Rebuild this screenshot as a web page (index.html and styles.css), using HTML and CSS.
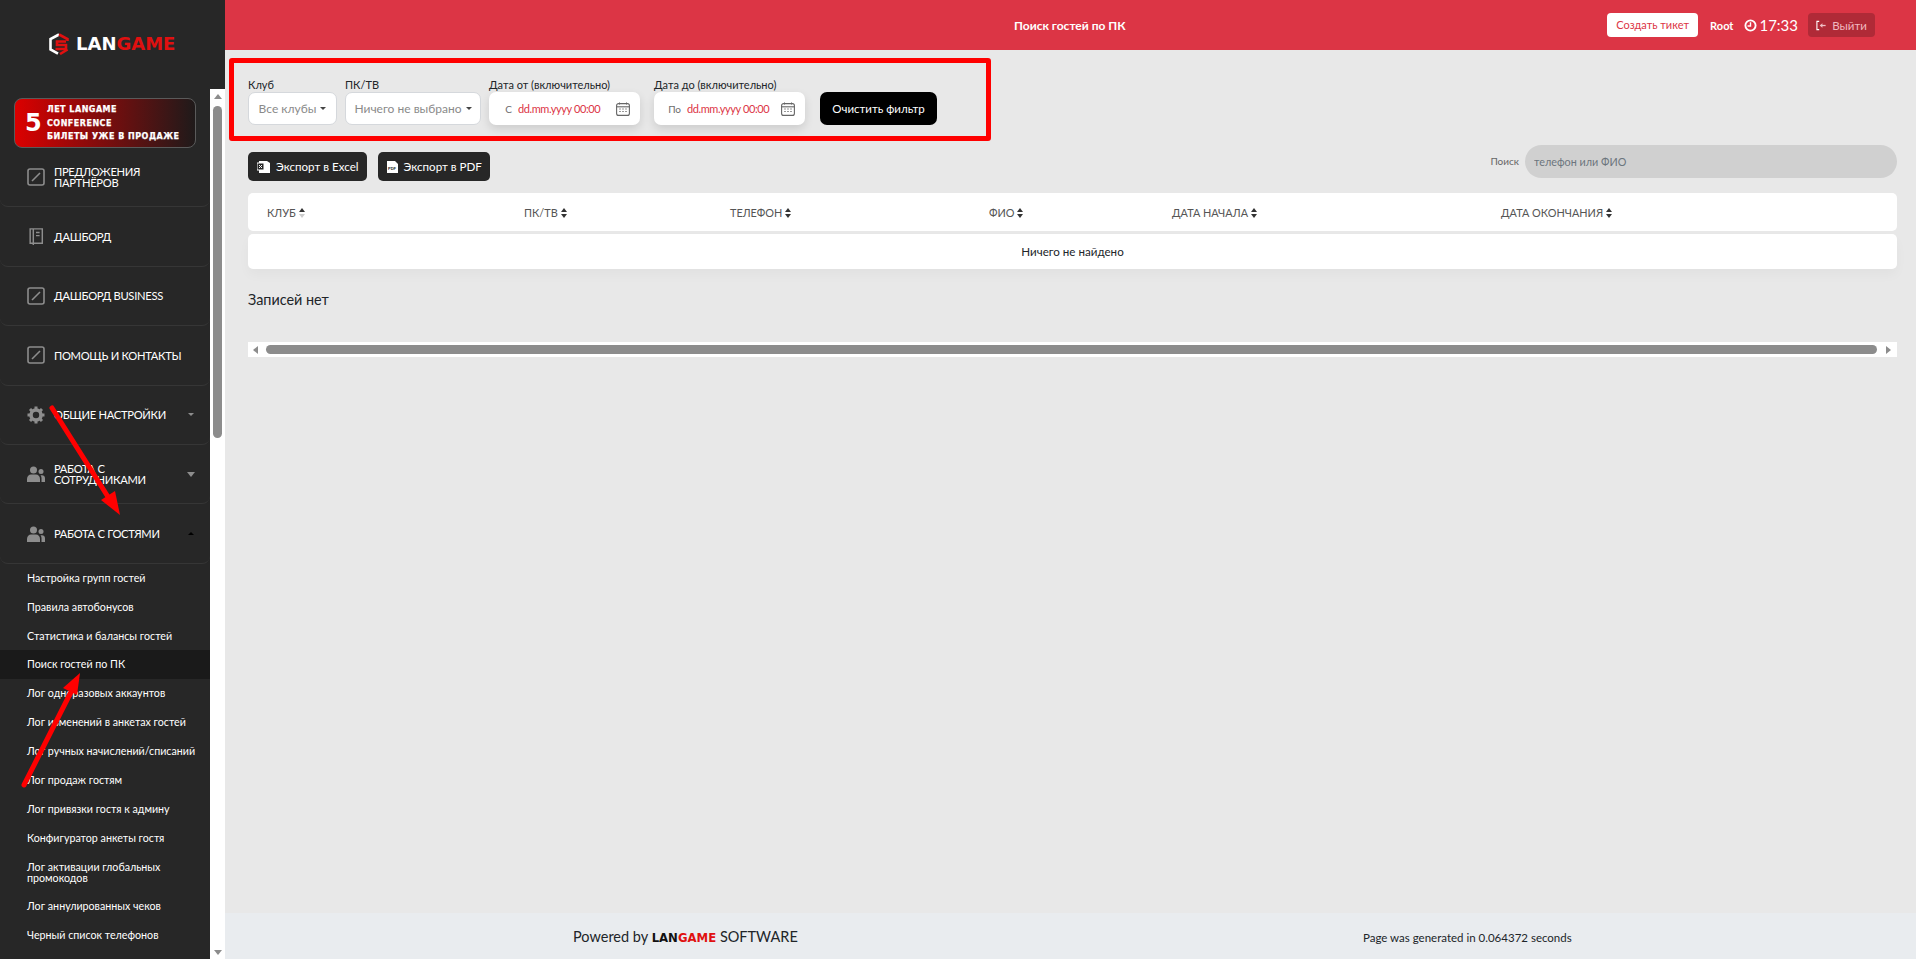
FILE: index.html
```html
<!DOCTYPE html>
<html lang="ru">
<head>
    <meta charset="UTF-8">
    <title>Поиск гостей по ПК</title>
    <link rel="stylesheet" href="styles.css">
</head>
<body>
    <div class="app">
        <!-- Боковое меню -->
        <aside class="sidebar">
            <div class="sidebar-top">
                <svg class="logo-icon" viewBox="0 0 22 22" width="22" height="22" fill="none" stroke-width="2.6">
                    <path d="M11 1.5 2.500 6v10.500l7.500 4.200" stroke="#fff"/>
                    <path d="M11 1.500 19.500 6v2M19.500 16.500 12 21" stroke="#e01010"/>
                    <path d="M18 8.500H9V12H18V16H7.500" stroke="#e01010"/>
                </svg>
                <span class="logo-text">LAN<b>GAME</b></span>
            </div>
            <div class="sidebar-body">
                <div class="sidebar-scroll">
                    <div class="banner">
                        <span class="banner-num">5</span>
                        <div class="banner-text">
                            <span>ЛЕТ LANGAME</span>
                            <span>CONFERENCE</span>
                            <span>БИЛЕТЫ УЖЕ В ПРОДАЖЕ</span>
                        </div>
                    </div>
                    <nav>
                        <a class="nav-item">
                            <svg class="nav-icon" viewBox="0 0 18 18"><rect x="1" y="1" width="16" height="16" rx="2" fill="none" stroke="#8d8d8d" stroke-width="1.6"/><path d="M5 13 13 5" stroke="#8d8d8d" stroke-width="1.6"/></svg>
                            <span>Предложения партнёров</span>
                        </a>
                        <a class="nav-item">
                            <svg class="nav-icon" viewBox="0 0 18 20"><path d="M2.500 1H16v16H2.500z M6 1v18" fill="none" stroke="#8d8d8d" stroke-width="1.6"/><path d="M9 5h4M9 8.500h4" stroke="#8d8d8d" stroke-width="1.5"/></svg>
                            <span>Дашборд</span>
                        </a>
                        <a class="nav-item">
                            <svg class="nav-icon" viewBox="0 0 18 18"><rect x="1" y="1" width="16" height="16" rx="2" fill="none" stroke="#8d8d8d" stroke-width="1.6"/><path d="M5 13 13 5" stroke="#8d8d8d" stroke-width="1.6"/></svg>
                            <span>Дашборд Business</span>
                        </a>
                        <a class="nav-item">
                            <svg class="nav-icon" viewBox="0 0 18 18"><rect x="1" y="1" width="16" height="16" rx="2" fill="none" stroke="#8d8d8d" stroke-width="1.6"/><path d="M5 13 13 5" stroke="#8d8d8d" stroke-width="1.6"/></svg>
                            <span>Помощь и контакты</span>
                        </a>
                        <a class="nav-item">
                            <svg class="nav-icon" viewBox="0 0 18 18"><circle cx="9" cy="9" r="5" fill="none" stroke="#8d8d8d" stroke-width="3.6"/><path d="M9 .5v3M9 14.500v3M.5 9h3M14.500 9h3M3 3l2.200 2.200M12.800 12.800 15 15M3 15l2.200-2.200M12.800 5.200 15 3" stroke="#8d8d8d" stroke-width="3"/></svg>
                            <span>Общие настройки</span>
                            <i class="caret caret-small"></i>
                        </a>
                        <a class="nav-item">
                            <svg class="nav-icon" viewBox="0 0 18 16"><circle cx="6.500" cy="4" r="3.500" fill="#8d8d8d"/><path d="M0 16v-3c0-3 2-4.500 4-4.500h5c2 0 4 1.500 4 4.500v3z" fill="#8d8d8d"/><circle cx="14" cy="5.500" r="2.500" fill="#8d8d8d"/><path d="M14.500 16v-4c0-1-.4-2-1-2.800h1.500c1.800 0 3 1.300 3 3V16z" fill="#8d8d8d"/></svg>
                            <span>Работа с сотрудниками</span>
                            <i class="caret"></i>
                        </a>
                        <a class="nav-item">
                            <svg class="nav-icon" viewBox="0 0 18 16"><circle cx="6.500" cy="4" r="3.500" fill="#8d8d8d"/><path d="M0 16v-3c0-3 2-4.500 4-4.500h5c2 0 4 1.500 4 4.500v3z" fill="#8d8d8d"/><circle cx="14" cy="5.500" r="2.500" fill="#8d8d8d"/><path d="M14.500 16v-4c0-1-.4-2-1-2.800h1.500c1.800 0 3 1.300 3 3V16z" fill="#8d8d8d"/></svg>
                            <span>Работа с гостями</span>
                            <i class="caret caret-up"></i>
                        </a>
                    </nav>
                    <ul class="sub-menu">
                        <li>Настройка групп гостей</li>
                        <li>Правила автобонусов</li>
                        <li>Статистика и балансы гостей</li>
                        <li class="active">Поиск гостей по ПК</li>
                        <li>Лог одноразовых аккаунтов</li>
                        <li>Лог изменений в анкетах гостей</li>
                        <li>Лог ручных начислений/списаний</li>
                        <li>Лог продаж гостям</li>
                        <li>Лог привязки гостя к админу</li>
                        <li>Конфигуратор анкеты гостя</li>
                        <li>Лог активации глобальных промокодов</li>
                        <li>Лог аннулированных чеков</li>
                        <li>Черный список телефонов</li>
                    </ul>
                </div>
                <div class="side-scrollbar">
                    <i class="arrow-up"></i>
                    <div class="side-thumb"></div>
                    <i class="arrow-down"></i>
                </div>
            </div>
        </aside>

        <div class="main">
            <header class="topbar">
                <h1 class="page-title">Поиск гостей по ПК</h1>
                <div class="topbar-right">
                    <a class="btn-ticket">Создать тикет</a>
                    <span class="user-name">Root</span>
                    <span class="clock">
                        <svg viewBox="0 0 14 14" width="13" height="13"><circle cx="7" cy="7" r="5.500" fill="none" stroke="#fff" stroke-width="2"/><path d="M7 3.500V7.500H3.800" fill="none" stroke="#fff" stroke-width="1.5"/></svg>
                        17:33
                    </span>
                    <a class="btn-exit">
                        <svg viewBox="0 0 12 12" width="11" height="11"><path d="M3.500 1.500H1v9h2.500" fill="none" stroke="#fff" stroke-width="1.2"/><path d="M10.500 6H6.500" stroke="#f0c0c5" stroke-width="1.4"/><path d="M4 6l3-2.500v5z" fill="#f0c0c5"/></svg>
                        Выйти
                    </a>
                </div>
            </header>

            <div class="content">
                <!-- Фильтр -->
                <form class="filter">
                    <div class="field">
                        <label>Клуб</label>
                        <div class="select select-club">Все клубы<i class="caret-dark"></i></div>
                    </div>
                    <div class="field">
                        <label>ПК/ТВ</label>
                        <div class="select select-pc">Ничего не выбрано<i class="caret-dark"></i></div>
                    </div>
                    <div class="field">
                        <label>Дата от (включительно)</label>
                        <div class="date date-from">
                            <span class="date-prefix">С</span>
                            <span class="date-value">dd.mm.yyyy 00:00</span>
                            <svg class="cal" viewBox="0 0 14 14"><rect x=".6" y="1.600" width="12.800" height="11.800" rx="2" fill="none" stroke="#666" stroke-width="1.1"/><path d="M.6 4.800h12.800" stroke="#666" stroke-width="1.1"/><path d="M3.500 .5v2M10.500 .5v2" stroke="#666"/><path d="M3 7h2M6 7h2M9 7h2M3 9.500h2M6 9.500h2M9 9.500h2" stroke="#999"/></svg>
                        </div>
                    </div>
                    <div class="field">
                        <label>Дата до (включительно)</label>
                        <div class="date date-to">
                            <span class="date-prefix">По</span>
                            <span class="date-value">dd.mm.yyyy 00:00</span>
                            <svg class="cal" viewBox="0 0 14 14"><rect x=".6" y="1.600" width="12.800" height="11.800" rx="2" fill="none" stroke="#666" stroke-width="1.1"/><path d="M.6 4.800h12.800" stroke="#666" stroke-width="1.1"/><path d="M3.500 .5v2M10.500 .5v2" stroke="#666"/><path d="M3 7h2M6 7h2M9 7h2M3 9.500h2M6 9.500h2M9 9.500h2" stroke="#999"/></svg>
                        </div>
                    </div>
                    <button type="button" class="btn-clear">Очистить фильтр</button>
                </form>

                <div class="inner">
                    <div class="toolbar">
                        <div class="exports">
                            <a class="btn-export">
                                <svg viewBox="0 0 13 12" width="13" height="12"><path d="M2 0h8l3 2v10H2z" fill="#fff"/><rect y="2" width="7" height="7" fill="#272727" stroke="#fff"/><path d="M2 4l3 3M5 4 2 7" stroke="#fff"/></svg>
                                Экспорт в Excel
                            </a>
                            <a class="btn-export">
                                <svg viewBox="0 0 11 12" width="11" height="12"><path d="M0 0h8l3 3v9H0z" fill="#fff"/><text x="1" y="8.500" class="pdf-mark">PDF</text></svg>
                                Экспорт в PDF
                            </a>
                        </div>
                        <div class="search">
                            <label>Поиск</label>
                            <input type="text" placeholder="телефон или ФИО">
                        </div>
                    </div>

                    <table class="guests">
                        <thead>
                            <tr>
                                <th>Клуб <svg class="sort" viewBox="0 0 6 10"><path d="M3 0l3 4H0z" fill="#333"/><path d="M3 10l3-4H0z" fill="#ccc"/></svg></th>
                                <th>ПК/ТВ <svg class="sort" viewBox="0 0 6 10"><path d="M3 0l3 4H0zM3 10l3-4H0z" fill="#333"/></svg></th>
                                <th>Телефон <svg class="sort" viewBox="0 0 6 10"><path d="M3 0l3 4H0zM3 10l3-4H0z" fill="#333"/></svg></th>
                                <th>ФИО <svg class="sort" viewBox="0 0 6 10"><path d="M3 0l3 4H0zM3 10l3-4H0z" fill="#333"/></svg></th>
                                <th>Дата начала <svg class="sort" viewBox="0 0 6 10"><path d="M3 0l3 4H0zM3 10l3-4H0z" fill="#333"/></svg></th>
                                <th>Дата окончания <svg class="sort" viewBox="0 0 6 10"><path d="M3 0l3 4H0zM3 10l3-4H0z" fill="#333"/></svg></th>
                            </tr>
                        </thead>
                        <tbody>
                            <tr><td colspan="6">Ничего не найдено</td></tr>
                        </tbody>
                    </table>

                    <p class="empty">Записей нет</p>

                    <div class="table-scroll">
                        <i class="arrow-left"></i>
                        <div class="table-thumb"></div>
                        <i class="arrow-right"></i>
                    </div>
                </div>
            </div>

            <footer class="footer">
                <div class="powered">Powered by <span class="footer-logo">LAN<b>GAME</b></span> SOFTWARE</div>
                <div class="generated">Page was generated in 0.064372 seconds</div>
            </footer>
        </div>
    </div>

    <!-- Красные стрелки поверх скриншота -->
    <svg class="annotations" viewBox="0 0 1916 959" width="1916" height="959">
        <path d="M52 408 110 500" stroke="#f00" stroke-width="5" stroke-linecap="round"/>
        <path d="M120 515 101 500 115 491z" fill="#f00"/>
        <path d="M24 785 72 690" stroke="#f00" stroke-width="5" stroke-linecap="round"/>
        <path d="M80 673 63 688 77 695z" fill="#f00"/>
    </svg>
</body>
</html>
```

FILE: styles.css
```css
* {
    box-sizing: border-box;
}
body {
    margin: 0;
    font-family: Lato, "Liberation Sans", sans-serif;
    font-size: 12px;
    color: #212529;
    background-color: #e8e8e8;
    overflow: hidden;
}
.app {
    display: flex;
    height: 959px;
}

/* Боковое меню */
.sidebar {
    width: 225px;
    flex-shrink: 0;
    display: flex;
    flex-direction: column;
    background-color: #272727;
}
.sidebar-top {
    height: 89px;
    flex-shrink: 0;
    padding: 33px 0 0 48px;
    display: flex;
    align-items: flex-start;
    gap: 6px;
}
.logo-text {
    font-family: "DejaVu Sans", sans-serif;
    font-weight: bold;
    font-size: 18px;
    line-height: 21px;
    color: #fff;
}
.logo-text b {
    color: #e01010;
}
.sidebar-body {
    flex: 1;
    min-height: 0;
    display: flex;
}
.sidebar-scroll {
    width: 210px;
    overflow: hidden;
}
.banner {
    height: 50px;
    margin: 9px 14px 0;
    border: 1px solid #5a5a5a;
    border-radius: 8px;
    background: linear-gradient(90deg, #dc0000 0%, #a00808 30%, #1f1a1a 100%);
    display: flex;
    align-items: center;
    padding-left: 10px;
    gap: 6px;
}
.banner-num {
    font-family: "DejaVu Sans", sans-serif;
    font-weight: bold;
    font-size: 24px;
    color: #fff;
    width: 16px;
}
.banner-text {
    display: flex;
    flex-direction: column;
    gap: 3px;
    padding-top: 2px;
    font-family: "DejaVu Sans", sans-serif;
    font-weight: bold;
    font-size: 8px;
    letter-spacing: 0.5px;
    line-height: 10.5px;
    color: #fff;
    white-space: nowrap;
    -webkit-text-stroke: 0.25px #fff;
}
.nav-item {
    height: 59.4px;
    padding: 0 15px 0 27px;
    display: flex;
    align-items: center;
    border-bottom: 1px solid #363636;
    border-radius: 0 0 8px 8px;
    color: #fff;
    font-size: 11.2px;
    letter-spacing: -0.3px;
    line-height: 11px;
    text-transform: uppercase;
}
.nav-item span {
    flex: 1;
    margin-left: 9px;
}
.nav-icon {
    width: 18px;
    height: 18px;
    flex-shrink: 0;
}
.caret {
    border-left: 4px solid transparent;
    border-right: 4px solid transparent;
    border-top: 5px solid #8d8d8d;
}
.caret-small {
    border-left-width: 3px;
    border-right-width: 3px;
    border-top-width: 3px;
    margin-right: 1px;
}
.caret-up {
    border-left-width: 3px;
    border-right-width: 3px;
    border-top: 0;
    border-bottom: 3px solid #000;
    margin-right: 1px;
}
.sub-menu {
    list-style: none;
    margin: 0;
    padding: 0;
    font-size: 10.7px;
    line-height: 11px;
    color: #fff;
}
.sub-menu li {
    min-height: 28.9px;
    padding: 8px 10px 9px 27px;
}
.sub-menu .active {
    background-color: #1a1a1a;
}
.side-scrollbar {
    width: 15px;
    background-color: #fff;
    padding: 0 3px;
    display: flex;
    flex-direction: column;
    align-items: center;
}
.side-thumb {
    width: 9px;
    height: 332px;
    margin-top: 7px;
    border-radius: 5px;
    background-color: #8c8c8c;
}
.arrow-up {
    margin-top: 5px;
    border-left: 4.5px solid transparent;
    border-right: 4.5px solid transparent;
    border-bottom: 5px solid #8c8c8c;
}
.arrow-down {
    margin-top: auto;
    margin-bottom: 4px;
    border-left: 4.5px solid transparent;
    border-right: 4.5px solid transparent;
    border-top: 5px solid #8c8c8c;
}

/* Основная часть */
.main {
    flex: 1;
    min-width: 0;
    display: flex;
    flex-direction: column;
}
.topbar {
    height: 50px;
    flex-shrink: 0;
    background-color: #dc3545;
    color: #fff;
    display: flex;
    align-items: center;
    padding-left: 789px;
    padding-right: 41px;
}
.page-title {
    margin: 0;
    font-size: 12px;
    font-weight: bold;
}
.topbar-right {
    margin-left: auto;
    display: flex;
    align-items: center;
}
.btn-ticket {
    width: 91px;
    height: 24px;
    border-radius: 4px;
    background-color: #fff;
    color: #dc3545;
    line-height: 24px;
    text-align: center;
    font-size: 11px;
}
.user-name {
    margin-left: 12px;
    font-weight: bold;
    font-size: 11px;
}
.clock {
    margin-left: 11px;
    font-size: 15px;
    display: flex;
    align-items: center;
    gap: 2px;
}
.btn-exit {
    margin-left: 10px;
    width: 67px;
    height: 24px;
    border-radius: 4px;
    background-color: #b02a37;
    color: #f0b8bf;
    display: flex;
    align-items: center;
    justify-content: center;
    gap: 5px;
    font-size: 11.5px;
}
.content {
    flex: 1;
    padding: 8px 19px 0 4px;
}

/* Фильтр */
.filter {
    width: 762px;
    height: 83px;
    border: 5px solid #f00;
    border-radius: 3px;
    padding: 0 0 11px 14px;
    display: flex;
    align-items: flex-end;
}
.field {
    margin-right: 8px;
}
.field label {
    display: block;
    font-size: 11px;
    line-height: 14px;
    color: #212529;
}
.select {
    height: 33px;
    border: 1px solid #d5d8dc;
    border-radius: 7px;
    background-color: #fff;
    color: #8a8a8a;
    font-size: 12px;
    display: flex;
    align-items: center;
    justify-content: center;
    white-space: nowrap;
}
.select-club {
    width: 89px;
}
.select-pc {
    width: 136px;
}
.caret-dark {
    margin-left: 4px;
    border-left: 3px solid transparent;
    border-right: 3px solid transparent;
    border-top: 3px solid #444;
}
.date {
    height: 33px;
    border-radius: 7px;
    background-color: #fff;
    box-shadow: 0 4px 10px rgba(0, 0, 0, 0.12);
    display: flex;
    align-items: center;
    width: 151px;
}
.date-from {
    margin-right: 6px;
}
.date-to {
    margin-right: 7px;
}
.date-prefix {
    color: #6c6c6c;
    font-size: 10px;
    width: 23px;
    text-align: right;
}
.date-to .date-prefix {
    width: 27px;
}
.date-value {
    margin-left: 6px;
    color: #dc3545;
    font-size: 11px;
    letter-spacing: -0.4px;
    white-space: nowrap;
}
.cal {
    width: 14px;
    height: 14px;
    margin-left: auto;
    margin-right: 10px;
}
.btn-clear {
    width: 117px;
    height: 33px;
    border: 0;
    border-radius: 7px;
    background-color: #000;
    color: #fff;
    font-family: inherit;
    font-size: 11.5px;
}

.inner {
    padding-left: 19px;
}
.toolbar {
    display: flex;
    justify-content: space-between;
    margin-top: 4px;
    height: 48px;
}
.exports {
    display: flex;
    gap: 11px;
    padding-top: 7px;
}
.btn-export {
    height: 29px;
    padding: 0 8px 0 9px;
    border-radius: 5px;
    background-color: #272727;
    color: #fff;
    font-size: 11.6px;
    display: flex;
    align-items: center;
    gap: 6px;
}
.pdf-mark {
    font-family: "Liberation Sans", sans-serif;
    font-size: 4px;
    font-weight: bold;
    fill: #272727;
}
.search {
    display: flex;
    align-items: flex-start;
}
.search label {
    margin-right: 6px;
    font-size: 10px;
    line-height: 33px;
    color: #666;
}
.search input {
    width: 372px;
    height: 33px;
    border: 0;
    outline: 0;
    padding: 0 9px;
    border-radius: 17px;
    background-color: #d0d0d0;
    font-family: inherit;
    font-size: 10.8px;
}
.search input::placeholder {
    color: #6c757d;
    opacity: 1;
}

/* Таблица */
.guests {
    width: 100%;
    table-layout: fixed;
    border-collapse: separate;
    border-spacing: 0 3px;
    margin-top: -3px;
}
.guests th {
    height: 38px;
    padding: 0 0 0 19px;
    background-color: #fff;
    color: #555;
    font-size: 10.9px;
    font-weight: normal;
    text-align: left;
    text-transform: uppercase;
}
.guests th:nth-child(1) { width: 257px; border-radius: 5px 0 0 5px; }
.guests th:nth-child(2) { width: 206px; }
.guests th:nth-child(3) { width: 259px; }
.guests th:nth-child(4) { width: 183px; }
.guests th:nth-child(5) { width: 329px; }
.guests th:nth-child(6) { border-radius: 0 5px 5px 0; }
.guests td {
    height: 35px;
    background-color: #fff;
    border-radius: 5px;
    text-align: center;
    font-size: 11.6px;
    box-shadow: 0 6px 12px rgba(0, 0, 0, 0.03);
}
.sort {
    width: 6px;
    height: 10px;
    vertical-align: -1px;
}
.empty {
    margin: 19px 0 0;
    font-size: 14.4px;
    line-height: 18px;
}
.table-scroll {
    margin-top: 33px;
    height: 15px;
    background-color: #fff;
    display: flex;
    align-items: center;
    padding: 0 6px 0 5px;
}
.table-thumb {
    flex: 1;
    height: 9px;
    margin: 0 9px 0 8px;
    border-radius: 5px;
    background-color: #8c8c8c;
}
.arrow-left {
    border-top: 4.5px solid transparent;
    border-bottom: 4.5px solid transparent;
    border-right: 5px solid #8c8c8c;
}
.arrow-right {
    border-top: 4.5px solid transparent;
    border-bottom: 4.5px solid transparent;
    border-left: 5px solid #8c8c8c;
}

/* Подвал */
.footer {
    height: 46px;
    flex-shrink: 0;
    background-color: #e9ecef;
    display: flex;
    align-items: center;
    padding-left: 348px;
}
.powered {
    font-size: 14.5px;
    width: 790px;
    white-space: nowrap;
}
.footer-logo {
    font-family: "DejaVu Sans", sans-serif;
    font-weight: bold;
    font-size: 11.7px;
    color: #111;
}
.footer-logo b {
    color: #e01010;
}
.generated {
    font-size: 11.5px;
    padding-top: 2px;
}

.annotations {
    position: absolute;
    left: 0;
    top: 0;
    pointer-events: none;
}
```
